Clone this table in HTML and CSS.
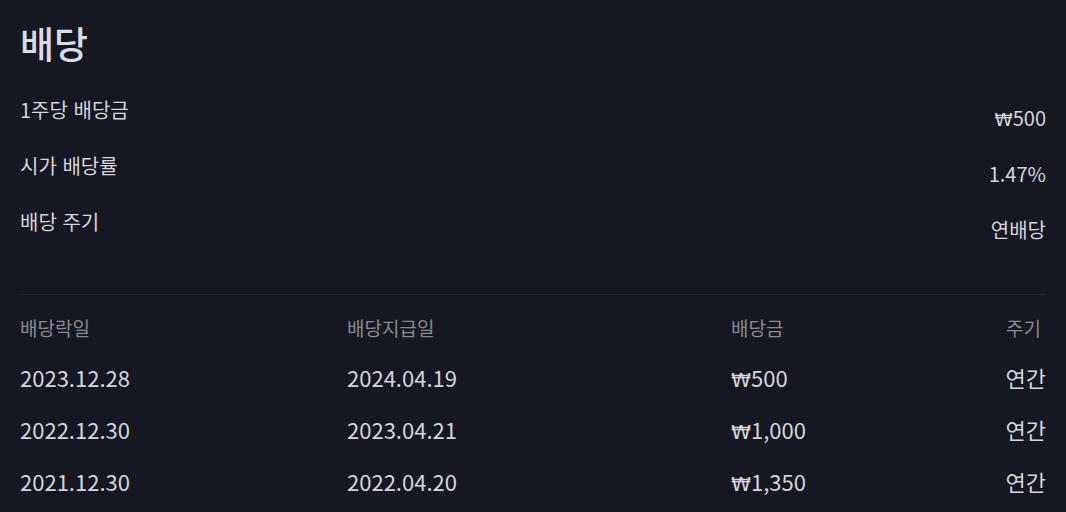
FILE: index.html
```html
<!DOCTYPE html>
<html lang="ko">
<head>
<meta charset="utf-8">
<link rel="stylesheet" href="styles.css">
</head>
<body>
<section class="dividend">
  <h1 class="title">배당</h1>
  <div class="summary">
    <div class="summary-row"><span class="label">1주당 배당금</span><span class="value"><span class="won">₩</span>500</span></div>
    <div class="summary-row"><span class="label">시가 배당률</span><span class="value">1.47%</span></div>
    <div class="summary-row"><span class="label">배당 주기</span><span class="value">연배당</span></div>
  </div>
  <div class="table">
    <div class="trow thead"><span>배당락일</span><span>배당지급일</span><span>배당금</span><span class="right">주기</span></div>
    <div class="trow"><span>2023.12.28</span><span>2024.04.19</span><span><span class="won">₩</span>500</span><span class="right">연간</span></div>
    <div class="trow"><span>2022.12.30</span><span>2023.04.21</span><span><span class="won">₩</span>1,000</span><span class="right">연간</span></div>
    <div class="trow"><span>2021.12.30</span><span>2022.04.20</span><span><span class="won">₩</span>1,350</span><span class="right">연간</span></div>
  </div>
</section>
</body>
</html>
```

FILE: styles.css
```css
html, body {
  margin: 0;
  padding: 0;
  background: #151722;
}
body {
  font-family: "Noto Sans CJK KR", "Noto Sans", sans-serif;
  color: #d4d4da;
}
.dividend {
  padding: 16px 20px 0 20px;
}
.title {
  margin: 0;
  font-size: 37px;
  font-weight: 500;
  line-height: 54px;
  color: #dcdce6;
}
.summary {
  display: flex;
  flex-direction: column;
  padding-top: 34px;
  padding-bottom: 22px;
  border-bottom: 1px solid #1f2231;
}
.summary-row {
  display: flex;
  justify-content: space-between;
  align-items: flex-start;
  height: 56px;
  font-size: 20px;
}
.label {
  line-height: 28px;
  margin-top: -8px;
}
.value {
  line-height: 28px;
}
.won {
  font-family: "DejaVu Sans", sans-serif;
  font-size: 0.92em;
}
.table {
  display: flex;
  flex-direction: column;
  padding-top: 16px;
}
.trow {
  display: grid;
  grid-template-columns: 327px 384px 1fr auto;
  height: 52px;
  align-items: center;
  font-size: 22px;
}
.thead {
  height: 32px;
  margin-bottom: 8px;
  font-size: 19px;
  color: #8a8b90;
}
.thead .right {
  padding-right: 5px;
}
.right {
  text-align: right;
}
```
